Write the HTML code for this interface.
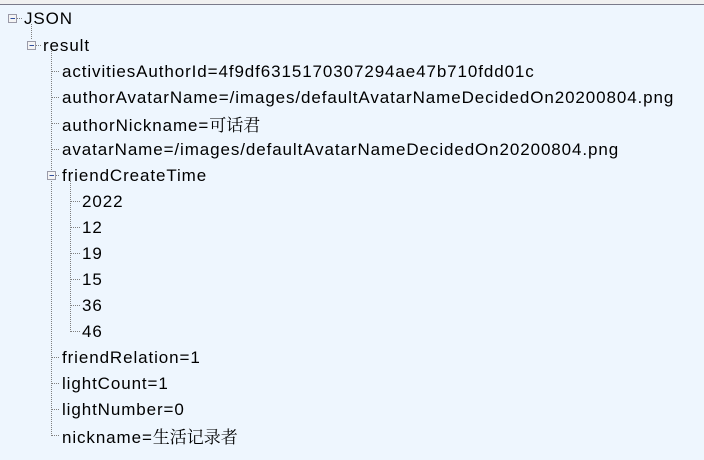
<!DOCTYPE html>
<html><head><meta charset="utf-8"><style>
body{margin:0;width:704px;height:460px;overflow:hidden;background:#eef6fe;position:relative;font-family:"Liberation Sans","Noto Sans CJK SC",sans-serif;font-size:17px;letter-spacing:0.9px;color:#000}
.top{position:absolute;left:0;top:0;width:704px;height:4px;background:#f0f0f0;border-bottom:1px solid #7a7a8a}
.t{position:absolute;line-height:20px;white-space:nowrap}
.c{font-family:"Noto Serif CJK SC","Liberation Serif",serif;letter-spacing:0}
svg{position:absolute;left:0;top:0}
</style></head><body>
<div class="top"></div>
<svg width="704" height="460">
<g stroke="#808080" stroke-dasharray="1,1" fill="none">
<line x1="17" y1="18.5" x2="22" y2="18.5"/>
<line x1="31.5" y1="24" x2="31.5" y2="40"/>
<line x1="36" y1="45.5" x2="41" y2="45.5"/>
<line x1="51.5" y1="51" x2="51.5" y2="436"/>
<line x1="52" y1="71.5" x2="60" y2="71.5"/>
<line x1="52" y1="97.5" x2="60" y2="97.5"/>
<line x1="52" y1="123.5" x2="60" y2="123.5"/>
<line x1="52" y1="149.5" x2="60" y2="149.5"/>
<line x1="56" y1="175.5" x2="60" y2="175.5"/>
<line x1="52" y1="357.5" x2="60" y2="357.5"/>
<line x1="52" y1="383.5" x2="60" y2="383.5"/>
<line x1="52" y1="409.5" x2="60" y2="409.5"/>
<line x1="52" y1="435.5" x2="60" y2="435.5"/>
<line x1="70.5" y1="181" x2="70.5" y2="332"/>
<line x1="71" y1="201.5" x2="80" y2="201.5"/>
<line x1="71" y1="227.5" x2="80" y2="227.5"/>
<line x1="71" y1="253.5" x2="80" y2="253.5"/>
<line x1="71" y1="279.5" x2="80" y2="279.5"/>
<line x1="71" y1="305.5" x2="80" y2="305.5"/>
<line x1="71" y1="331.5" x2="80" y2="331.5"/>
</g>
<g fill="#f4f4f4" stroke="#9a9aa8">
<rect x="8.5" y="14.5" width="8" height="8"/>
<rect x="27.5" y="41.5" width="8" height="8"/>
<rect x="47.5" y="171.5" width="8" height="8"/>
</g>
<g stroke="#3050a0">
<line x1="10.5" y1="18.5" x2="15" y2="18.5"/>
<line x1="29.5" y1="45.5" x2="34" y2="45.5"/>
<line x1="49.5" y1="175.5" x2="54" y2="175.5"/>
</g>
</svg>
<div class="t" style="left:24px;top:9px">JSON</div>
<div class="t" style="left:43px;top:36px">result</div>
<div class="t" style="left:62px;top:62px">activitiesAuthorId=4f9df6315170307294ae47b710fdd01c</div>
<div class="t" style="left:62px;top:88px">authorAvatarName=/images/defaultAvatarNameDecidedOn20200804.png</div>
<div class="t" style="left:62px;top:114px">authorNickname=<span class="c">可话君</span></div>
<div class="t" style="left:62px;top:140px">avatarName=/images/defaultAvatarNameDecidedOn20200804.png</div>
<div class="t" style="left:62px;top:166px">friendCreateTime</div>
<div class="t" style="left:82px;top:192px">2022</div>
<div class="t" style="left:82px;top:218px">12</div>
<div class="t" style="left:82px;top:244px">19</div>
<div class="t" style="left:82px;top:270px">15</div>
<div class="t" style="left:82px;top:296px">36</div>
<div class="t" style="left:82px;top:322px">46</div>
<div class="t" style="left:62px;top:348px">friendRelation=1</div>
<div class="t" style="left:62px;top:374px">lightCount=1</div>
<div class="t" style="left:62px;top:400px">lightNumber=0</div>
<div class="t" style="left:62px;top:426px">nickname=<span class="c">生活记录者</span></div>
</body></html>
